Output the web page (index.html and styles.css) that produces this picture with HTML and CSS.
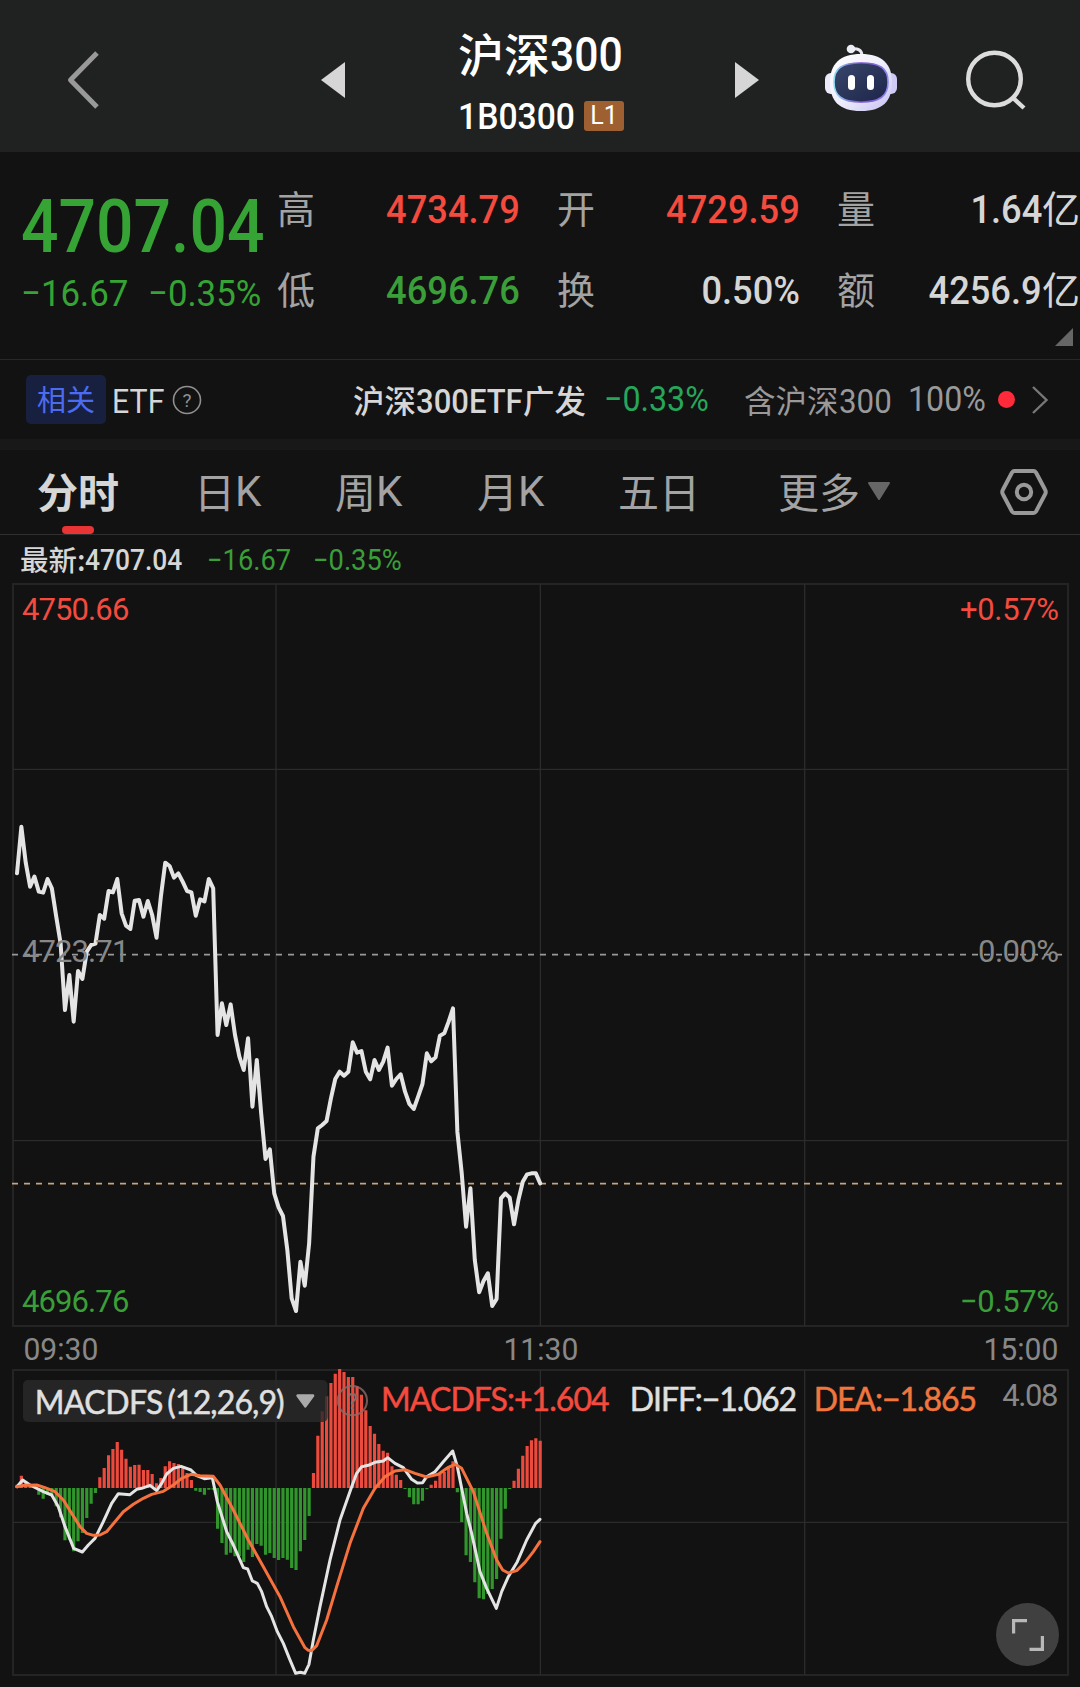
FILE: index.html
```
<!DOCTYPE html>
<html lang="zh-CN">
<head>
  <meta charset="UTF-8">
  <meta name="viewport" content="width=device-width, initial-scale=1.0">
  <title>沪深300</title>
  <link rel="stylesheet" href="styles.css">
</head>
<body>
  <header class="topbar">
    <svg class="back" width="34" height="60" viewBox="0 0 34 60"><path d="M31 3 4.500 30 31 57" fill="none" stroke="#999" stroke-width="5" stroke-linejoin="round"/></svg>
    <svg class="prev" width="24" height="36" viewBox="0 0 24 36"><path d="M24 0V36L0 18z" fill="#d6d6d6"/></svg>
    <div class="title">
      <div class="name">沪深<span class="num">300</span></div>
      <div class="code"><span class="num">1B0300</span><span class="level">L1</span></div>
    </div>
    <svg class="next" width="24" height="36" viewBox="0 0 24 36"><path d="M0 0V36L24 18z" fill="#d6d6d6"/></svg>
    <svg class="robot" width="72" height="68" viewBox="0 0 72 68">
      <defs>
        <linearGradient id="shell" x1="0" y1="0" x2="1" y2="1">
          <stop offset="0" stop-color="#fff"/>
          <stop offset=".5" stop-color="#f0eefc"/>
          <stop offset="1" stop-color="#c5c0f2"/>
        </linearGradient>
        <linearGradient id="face" x1="0" y1="0" x2="1" y2="1">
          <stop offset="0" stop-color="#39466b"/>
          <stop offset="1" stop-color="#1d2549"/>
        </linearGradient>
        <linearGradient id="rim" x1="0" y1="0" x2="1" y2="0">
          <stop offset="0" stop-color="#8fdcf5"/>
          <stop offset=".5" stop-color="#7a49c8"/>
          <stop offset="1" stop-color="#8a86ee"/>
        </linearGradient>
      </defs>
      <path d="M26 5C33 4 37 6 37 12" fill="none" stroke="#e8e8f2" stroke-width="3"/>
      <circle cx="26" cy="5" r="4.3" fill="#eceef6"/>
      <rect x="0" y="29" width="14" height="21" rx="6" fill="#eceafa"/>
      <rect x="58" y="29" width="14" height="21" rx="6" fill="#cfcaf4"/>
      <path d="M36 10C57 10 67 20 67 38 67 57 58 67 36 67S5 57 5 38C5 20 15 10 36 10z" fill="url(#shell)"/>
      <path d="M36 19C55 19 63 24 63 38S55 58 36 58 9 52 9 38 17 19 36 19z" fill="url(#face)" stroke="url(#rim)" stroke-width="1.6"/>
      <rect x="23" y="31" width="7" height="15" rx="3.5" fill="#fff"/>
      <rect x="42" y="31" width="7" height="15" rx="3.5" fill="#fff"/>
    </svg>
    <svg class="search" width="60" height="60" viewBox="0 0 60 60" fill="none" stroke="#dcdcdc" stroke-width="4.4"><circle cx="28.5" cy="29" r="26.3"/><path d="M46 47 58 58"/></svg>
  </header>

  <section class="quote">
    <div class="price">
      <div class="last num">4707.04</div>
      <div class="change"><span class="num">−16.67</span><span class="num">−0.35%</span></div>
    </div>
    <div class="stats">
      <div class="stat"><label>高</label><span class="num up">4734.79</span></div>
      <div class="stat"><label>开</label><span class="num up">4729.59</span></div>
      <div class="stat"><label>量</label><span class="amount"><span class="num">1.64</span>亿</span></div>
      <div class="stat"><label>低</label><span class="num down">4696.76</span></div>
      <div class="stat"><label>换</label><span class="num">0.50%</span></div>
      <div class="stat"><label>额</label><span class="amount"><span class="num">4256.9</span>亿</span></div>
    </div>
    <svg class="corner" width="18" height="18" viewBox="0 0 18 18"><path d="M18 0V18H0z" fill="#666"/></svg>
  </section>

  <section class="related">
    <span class="tag">相关</span>
    <span class="etf num">ETF</span>
    <svg class="help" width="30" height="30" viewBox="0 0 30 30"><circle cx="15" cy="15" r="13.5" fill="none" stroke="#909090" stroke-width="1.6"/><text x="15" y="21.5" text-anchor="middle" class="help-mark">?</text></svg>
    <span class="fund">沪深<span class="num">300ETF</span>广发</span>
    <span class="fund-change num">−0.33%</span>
    <span class="holding">含沪深<span class="num">300</span></span>
    <span class="percent num">100%</span>
    <i class="dot"></i>
    <svg class="more" width="18" height="30" viewBox="0 0 18 30"><path d="M2 2 15.500 15 2 28" fill="none" stroke="#777" stroke-width="2.4"/></svg>
  </section>

  <nav class="tabs">
    <a class="tab active">分时</a>
    <a class="tab">日<span class="k">K</span></a>
    <a class="tab">周<span class="k">K</span></a>
    <a class="tab">月<span class="k">K</span></a>
    <a class="tab">五日</a>
    <a class="tab">更多<svg width="24" height="19" viewBox="0 0 24 19"><path d="M2 1H22L12 17z" fill="#666" stroke="#666" stroke-width="2" stroke-linejoin="round"/></svg></a>
    <svg class="settings" width="50" height="48" viewBox="0 0 50 48" fill="none" stroke="#999" stroke-width="4" stroke-linejoin="round"><path d="M15.500 3H34.500Q36 3 37 4.500L46 21.500Q47.500 24 46 26.500L37 43.500Q36 45 34.500 45H15.500Q14 45 13 43.500L4 26.500Q2.500 24 4 21.500L13 4.500Q14 3 15.500 3z"/><circle cx="25" cy="24" r="7.200"/></svg>
  </nav>

  <div class="latest">
    <span>最新:</span><span class="num">4707.04</span>
    <span class="num down">−16.67</span>
    <span class="num down">−0.35%</span>
  </div>

  <!-- both charts use 3 units per pixel -->
  <svg class="chart" width="1080" height="746" viewBox="0 -594 3240 2238">
    <g class="grid">
      <path class="frame" d="M39-588H3204V1638H39z"/>
      <path d="M828-588V1638M1621-588V1638M2414-588V1638M39-32H3204M39 1082H3204"/>
    </g>
    <path class="base-line" d="M36 524H3204"/>
    <path class="now-line" d="M36 1211H3204"/>
    <polyline class="line" id="price-line"/>
    <g class="labels">
      <text class="up" x="66" y="-479" textLength="322">4750.66</text>
      <text class="up" x="2880" y="-479" textLength="297">+0.57%</text>
      <text class="flat" x="66" y="546" textLength="322">4723.71</text>
      <text class="flat" x="2934" y="546" textLength="243">0.00%</text>
      <text class="down" x="66" y="1597" textLength="322">4696.76</text>
      <text class="down" x="2880" y="1597" textLength="297">−0.57%</text>
    </g>
  </svg>

  <div class="times">
    <span class="num">09:30</span>
    <span class="num">11:30</span>
    <span class="num">15:00</span>
  </div>

  <div class="macd">
    <svg class="macd-chart" width="1080" height="319" viewBox="0 144 3240 957">
      <g class="grid">
        <path class="frame" d="M39 150H3204V1065H39z"/>
        <path d="M828 150V1065M1621 150V1065M2414 150V1065M39 607H3204"/>
      </g>
      <path class="bars bars-up" id="bars-up"/>
      <path class="bars bars-down" id="bars-down"/>
      <polyline class="line" points="51,500 68,480 90,495 130,515 155,525 175,560 195,620 221,685 247,696 265,675 285,655 310,605 335,550 355,521 390,524 410,508 425,505 450,496 470,512 485,490 500,462 520,445 543,439 573,450 590,467 613,476 637,473 652,545 680,635 700,675 730,743 743,747 757,783 772,790 785,815 800,860 815,890 832,935 850,970 868,1015 887,1060 901,1057 914,1060 927,1033 940,960 960,860 990,720 1020,600 1055,500 1070,460 1085,440 1105,436 1125,427 1150,423 1163,413 1185,430 1210,443 1235,478 1252,489 1268,488 1280,470 1305,455 1330,425 1358,393 1372,440 1400,580 1415,640 1440,755 1460,805 1489,865 1505,815 1525,770 1552,725 1580,660 1607,610 1620,598"/>
      <polyline class="line dea-line" points="51,500 75,496 110,495 135,503 165,515 190,540 215,580 240,620 260,640 280,646 300,645 320,635 345,605 370,575 400,553 430,535 455,523 490,514 520,495 545,475 573,463 600,467 640,469 660,495 700,570 745,660 790,740 840,830 880,920 915,983 925,991 935,992 950,977 980,900 1010,800 1050,670 1090,565 1125,505 1155,470 1185,453 1215,449 1245,460 1280,471 1315,463 1345,442 1365,433 1385,445 1420,515 1460,640 1490,720 1508,750 1525,759 1550,752 1575,727 1600,695 1620,665"/>
      <rect x="69" y="180" width="914" height="126" rx="15" class="pill"/>
      <path d="M893 227H939L916 259z" fill="#aaa" stroke="#aaa" stroke-width="8" stroke-linejoin="round"/>
      <circle cx="1057" cy="242" r="44" class="macd-help"/>
      <text x="1057" y="267" text-anchor="middle" class="macd-mark">?</text>
      <g class="indicator">
        <text x="104" y="282" textLength="386">MACDFS</text>
        <text x="502" y="282" textLength="352">(12,26,9)</text>
        <text class="up" x="1143" y="273" textLength="686">MACDFS:+1.604</text>
        <text x="1889" y="273" textLength="502">DIFF:−1.062</text>
        <text class="dea" x="2441" y="273" textLength="490">DEA:−1.865</text>
      </g>
      <g class="labels"><text class="flat" x="3007" y="257" textLength="168">4.08</text></g>
    </svg>
    <button class="expand" aria-label="全屏"><svg width="32" height="32" viewBox="0 0 32 32"><path d="M1.500 14.500V1.500H15M17.500 30.500H30.500V17" fill="none" stroke="#b8b8b8" stroke-width="3.400"/></svg></button>
  </div>

  <script>
    const startX = 51;
    const step = 13.08;

    // one value per minute, 09:30 - 11:30
    const prices = [
      280, 140, 248, 320, 290, 335, 338, 297, 325, 410, 490, 690, 585, 725, 573, 597, 515, 495, 491, 405,
      416, 333, 337, 297, 400, 437, 447, 362, 360, 410, 363, 405, 473, 350, 248, 258, 293, 280, 305, 333,
      337, 407, 358, 364, 297, 325, 765, 670, 735, 673, 765, 830, 870, 775, 980, 840, 1000, 1137, 1108, 1240,
      1282, 1308, 1410, 1555, 1593, 1445, 1517, 1390, 1130, 1045, 1035, 1023, 955, 897, 875, 887, 875, 787, 818, 813,
      875, 898, 840, 870, 845, 803, 917, 897, 883, 935, 972, 987, 950, 912, 820, 844, 832, 767, 760, 725,
      685, 1055, 1180, 1340, 1225, 1440, 1537, 1503, 1480, 1578, 1557, 1255, 1240, 1253, 1333, 1260, 1205, 1183, 1180, 1180,
      1210
    ];

    const macd = [
      10, 37, 20, 12, 3, -20, -32, -20, -22, -55, -88, -157, -155, -190, -160, -135, -90, -47, -15, 32,
      60, 98, 117, 138, 115, 88, 64, 69, 70, 54, 54, 42, 14, 30, 65, 80, 75, 72, 60, 45,
      24, -8, -12, -20, -5, -5, -122, -165, -200, -194, -205, -205, -222, -185, -207, -168, -173, -200, -195, -210,
      -216, -210, -215, -240, -246, -190, -156, -84, 45, 157, 230, 275, 315, 343, 357, 348, 333, 333, 305, 280,
      233, 186, 163, 132, 112, 106, 65, 40, 24, -3, -28, -49, -49, -38, -4, 10, 22, 42, 48, 62,
      80, -13, -102, -202, -222, -283, -331, -334, -318, -303, -273, -152, -62, -3, 22, 58, 97, 126, 143, 149,
      142
    ];

    const xAt = (i) => (startX + i * step).toFixed(1);

    document.getElementById("price-line").setAttribute(
      "points",
      prices.map((y, i) => `${xAt(i)},${y}`).join(" ")
    );

    const bars = (test) => macd
      .map((v, i) => (test(v) ? `M${xAt(i)} 504v${-v}` : ""))
      .join("");

    document.getElementById("bars-up").setAttribute("d", bars((v) => v > 0));
    document.getElementById("bars-down").setAttribute("d", bars((v) => v < 0));
  </script>
</body>
</html>
```
FILE: styles.css
```
* {
  box-sizing: border-box;
}

body {
  margin: 0;
  width: 1080px;
  height: 1687px;
  overflow: hidden;
  background: #121212;
  color: #d6d6d6;
  font-family: "Noto Sans CJK SC", sans-serif;
  line-height: 1;
}

svg {
  display: block;
  flex: none;
}

/* narrow figures */
.num {
  display: inline-block;
  font-family: Roboto, sans-serif;
  font-weight: 500;
  white-space: nowrap;
  transform: scaleX(0.92);
  transform-origin: 0 50%;
}

.up {
  color: #f44b3e;
  fill: #f44b3e;
}

.down {
  color: #3a9f38;
  fill: #3a9f38;
}

.flat {
  fill: #888;
}

/* top bar */
.topbar {
  display: flex;
  align-items: center;
  height: 152px;
  padding: 8px 0 0 66px;
  background: #202121;
}

.prev {
  margin-left: 221px;
}

.title {
  width: 166px;
  margin-left: 113px;
  color: #fff;
}

.name {
  display: flex;
  align-items: center;
  height: 46px;
  font-size: 46px;
  font-weight: 500;
  white-space: nowrap;
}

.name .num {
  font-size: 49px;
  transform: scaleX(0.87);
  padding-top: 4px;
}

.code {
  display: flex;
  align-items: center;
  height: 30px;
  margin-top: 26px;
}

.code .num {
  width: 126px;
  font-size: 37px;
  transform: scaleX(0.91);
}

.level {
  flex: none;
  width: 40px;
  height: 30px;
  border-radius: 3px;
  background: #9e6031;
  font: 25px/30px Roboto, sans-serif;
  text-align: center;
}

.next {
  margin-left: 111px;
}

.robot {
  margin: -5px 0 0 66px;
}

.search {
  margin-left: 69px;
}

/* quote */
.quote {
  position: relative;
  display: flex;
  height: 208px;
  border-bottom: 1px solid #282828;
}

.price {
  width: 277px;
  padding: 37px 0 0 21px;
  color: #36a435;
}

.last {
  font-size: 75px;
  transform: scaleX(0.88);
}

.change {
  display: grid;
  grid-template-columns: 127px 120px;
  margin-top: 11px;
  font-size: 37px;
}

.change .num {
  font-weight: 400;
  transform: scaleX(0.94);
}

.stats {
  display: grid;
  grid-template-columns: repeat(3, 243px);
  grid-auto-rows: 81px;
  column-gap: 37px;
  padding-top: 14px;
}

.stat {
  display: flex;
  align-items: center;
  justify-content: space-between;
  font-size: 38px;
}

.stat label {
  color: #a3a3a3;
  font-size: 38px;
}

.stat .num {
  padding-top: 7px;
  font-size: 39px;
  transform: scaleX(0.93);
  transform-origin: 100% 50%;
}

.amount {
  display: flex;
  align-items: center;
}

.corner {
  position: absolute;
  right: 7px;
  bottom: 13px;
}

/* related etf */
.related {
  display: flex;
  align-items: center;
  height: 90px;
  padding-left: 26px;
  border-bottom: 11px solid #181818;
}

.tag {
  width: 80px;
  height: 49px;
  border-radius: 5px;
  background: #182040;
  color: #4b6cf0;
  font-size: 29px;
  line-height: 47px;
  text-align: center;
}

.etf {
  width: 59px;
  margin-left: 6px;
  padding-top: 3px;
  font-size: 33px;
  font-weight: 400;
}

.help {
  margin-left: 1px;
}

.help-mark {
  fill: #909090;
  font: 19px Roboto, sans-serif;
}

.fund {
  display: flex;
  align-items: center;
  width: 251px;
  margin-left: 151px;
  font-size: 31.500px;
  font-weight: 500;
  white-space: nowrap;
}

.fund .num {
  width: 107px;
  padding-top: 3px;
  font-size: 33px;
  transform: scaleX(0.94);
}

.fund-change {
  width: 140px;
  color: #26a65b;
  font-size: 35px;
  font-weight: 400;
}

.holding {
  display: flex;
  align-items: center;
  width: 164px;
  color: #999;
  font-size: 31.500px;
  white-space: nowrap;
}

.holding .num {
  padding-top: 3px;
  font-size: 34px;
  font-weight: 400;
}

.percent {
  width: 90px;
  color: #999;
  font-size: 35px;
  font-weight: 400;
}

.dot {
  width: 17px;
  height: 17px;
  border-radius: 50%;
  background: #ff2a3a;
}

.more {
  margin-left: 16px;
}

/* tabs */
.tabs {
  position: relative;
  display: grid;
  grid-template-columns: 157px 141px 142px 141px 160px 221px 50px;
  align-items: center;
  height: 85px;
  padding-left: 37px;
  border-bottom: 1px solid #303030;
}

.tab {
  position: relative;
  display: flex;
  align-items: center;
  height: 84px;
  padding-bottom: 4px;
  color: #a3a3a3;
  font-size: 41px;
}

.tab svg {
  margin: 3px 0 0 7px;
}

.tab.active {
  color: #d6d6d6;
  font-size: 41px;
  font-weight: 700;
}

.tab.active::after {
  content: "";
  position: absolute;
  left: 25px;
  bottom: 0;
  width: 32px;
  height: 8px;
  border-radius: 4px;
  background: #e83434;
}

.k {
  padding-top: 3px;
  font: 42px/1 Roboto, sans-serif;
}

/* latest price */
.latest {
  display: grid;
  grid-template-columns: 65px 122px 106px 120px;
  align-items: center;
  height: 47px;
  padding: 2px 0 0 20px;
  font-size: 28.500px;
  font-weight: 500;
  white-space: nowrap;
}

.latest .num {
  padding-top: 2px;
  font-size: 29px;
  transform: scaleX(0.91);
}

.latest .down {
  font-weight: 400;
  transform: scaleX(0.94);
}

/* charts */
.grid {
  fill: none;
  stroke: #2b2b2b;
  stroke-width: 4;
}

.frame {
  stroke: #242424;
  stroke-width: 6;
}

.base-line,
.now-line {
  fill: none;
  stroke: #999;
  stroke-width: 5;
  stroke-dasharray: 18;
}

.now-line {
  stroke: #c4a57c;
}

.line {
  fill: none;
  stroke: #e4e4e4;
  stroke-width: 12;
  stroke-linejoin: round;
  stroke-linecap: round;
}

.macd-chart .line {
  stroke-width: 9;
}

.macd-chart .dea-line {
  stroke: #f5713d;
}

.labels text {
  font: 93px Roboto, sans-serif;
}

.times {
  display: flex;
  justify-content: space-between;
  align-items: center;
  height: 40px;
  padding: 2px 19px 0 21px;
  color: #888;
  font-size: 32px;
}

.times .num {
  font-weight: 400;
  transform: scaleX(0.94);
  transform-origin: 50% 50%;
}

.macd {
  position: relative;
}

.bars {
  stroke-width: 9.500;
}

.bars-up {
  stroke: #ec4a3d;
}

.bars-down {
  stroke: #30962c;
}

.pill {
  fill: rgba(42, 42, 42, 0.82);
}

.macd-help {
  fill: none;
  stroke: #8c6b68;
  stroke-opacity: 0.8;
  stroke-width: 6;
}

.macd-mark {
  fill: #8c6b68;
  font: 68px Roboto, sans-serif;
}

.indicator text {
  font: 96px Lato, sans-serif;
  fill: #e0e0e0;
  stroke: #e0e0e0;
  stroke-width: 1.5;
}

.indicator .up {
  fill: #f44b3e;
  stroke: #f44b3e;
}

.indicator .dea {
  fill: #f0763e;
  stroke: #f0763e;
}

.expand {
  position: absolute;
  right: 21px;
  top: 235px;
  display: flex;
  align-items: center;
  justify-content: center;
  width: 63px;
  height: 63px;
  padding: 0;
  border: none;
  border-radius: 50%;
  background: #404040;
}
```
